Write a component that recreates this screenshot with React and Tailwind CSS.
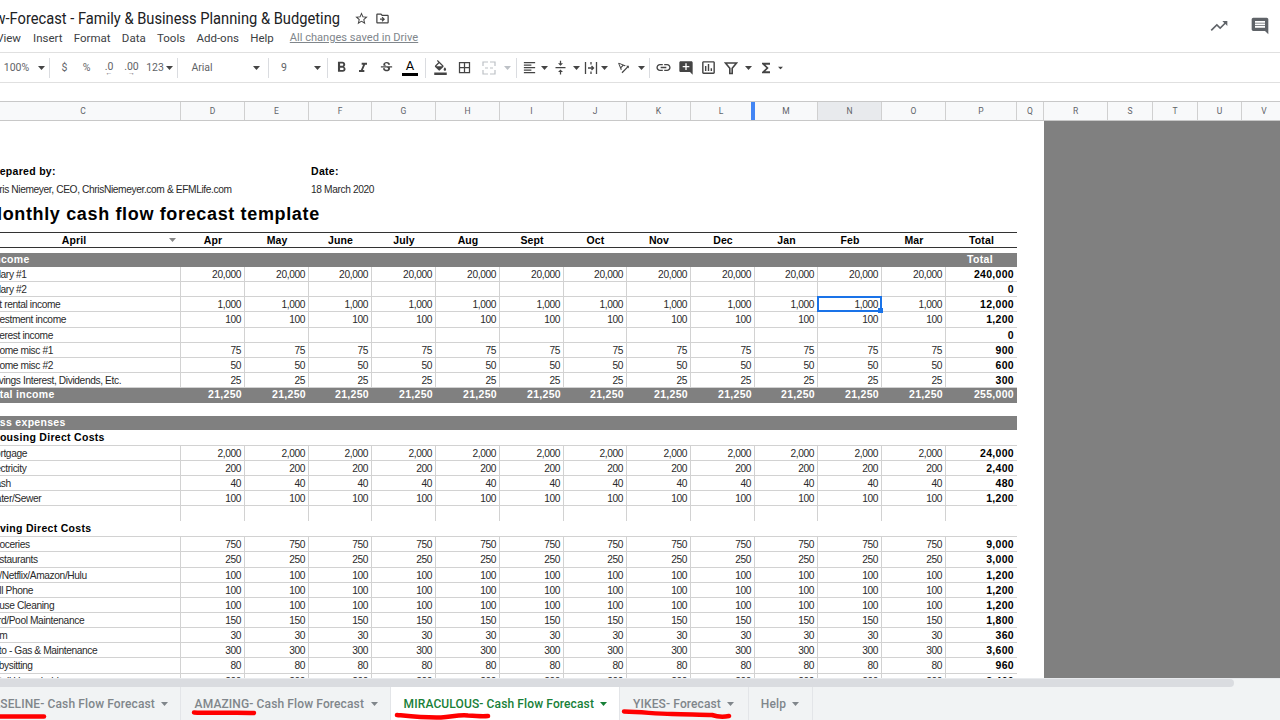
import React from "react";
import {
  MdStarBorder, MdOutlineDriveFileMove, MdFormatBold, MdFormatItalic, MdStrikethroughS, MdFormatColorFill,
  MdBorderAll, MdFormatAlignLeft, MdVerticalAlignCenter, MdTextRotationAngleup, MdLink, MdAddComment,
  MdOutlineInsertChart, MdFunctions, MdComment, MdTrendingUp,
} from "react-icons/md";

const sans = "font-['Liberation_Sans',Arial,sans-serif]";
const rob = "font-['Roboto',sans-serif]";
const gridCols = "grid grid-cols-[181px_64px_64px_63px_64px_64px_64px_63px_64px_64px_63px_64px_64px_71px]";
const months = ["Apr", "May", "June", "July", "Aug", "Sept", "Oct", "Nov", "Dec", "Jan", "Feb", "Mar"];

function Caret({ className = "" }) {
  return (
    <svg width="7" height="4" viewBox="0 0 7 4" className={`shrink-0 ${className}`}>
      <path d="M0 0h7L3.5 4z" fill="currentColor" />
    </svg>
  );
}

function Tool({ w, children, className = "" }) {
  return <div className={`flex items-center justify-center shrink-0 h-full ${w} ${className}`}>{children}</div>;
}
function Sep() {
  return <div className="w-px h-[20px] bg-[#dadce0] shrink-0" />;
}

function MergeIcon() {
  return (
    <svg width="14" height="14" viewBox="0 0 14 14" fill="none" stroke="#bdc1c6" strokeWidth="1.2">
      <path d="M1 5V1h5M8 1h5v4M1 9v4h5M8 13h5V9M3 7h3M8 7h3" />
    </svg>
  );
}
function WrapIcon() {
  return (
    <svg width="14" height="14" viewBox="0 0 14 14" fill="none" stroke="#444" strokeWidth="1.3">
      <path d="M1.5 1v12M12.5 1v12" />
      <path d="M4 7h5.5M7.5 5l2 2-2 2" />
      <path d="M7 1v2.5M7 10.5V13" />
    </svg>
  );
}
function FilterIcon() {
  return (
    <svg width="14" height="14" viewBox="0 0 14 14" fill="none" stroke="#444" strokeWidth="1.6">
      <path d="M1.5 2h11L8.2 7.2V12.5H5.8V7.2z" />
    </svg>
  );
}

function Toolbar() {
  const t = `text-[10.5px] text-[#5f6368] ${rob}`;
  return (
    <div className="flex items-center h-[31px] border-y border-[#e0e0e0] text-[#444] overflow-hidden">
      <Tool w="w-[33px]" className={t}>100%</Tool>
      <Tool w="w-[16px]"><Caret /></Tool>
      <Sep />
      <Tool w="w-[29px]" className={t}>$</Tool>
      <Tool w="w-[15px]" className={t}>%</Tool>
      <Tool w="w-[30px]" className={`${t} flex-col leading-[9px] pt-[3px]`}><span>.0</span><span className="text-[7px] leading-[5px]">←</span></Tool>
      <Tool w="w-[15px]" className={`${t} flex-col leading-[9px] pt-[3px]`}><span>.00</span><span className="text-[7px] leading-[5px]">→</span></Tool>
      <Tool w="w-[5px]"> </Tool>
      <Tool w="w-[22px]" className={t}>123</Tool>
      <Tool w="w-[6px]"><Caret /></Tool>
      <Tool w="w-[5px]"> </Tool>
      <Sep />
      <Tool w="w-[9px]"> </Tool>
      <Tool w="w-[30px]" className={`${t} ${sans}`}>Arial</Tool>
      <Tool w="w-[36px]"> </Tool>
      <Tool w="w-[7px]"><Caret /></Tool>
      <Tool w="w-[8px]"> </Tool>
      <Sep />
      <Tool w="w-[30px]" className={t}>9</Tool>
      <Tool w="w-[15px]"> </Tool>
      <Tool w="w-[7px]"><Caret /></Tool>
      <Tool w="w-[6px]"> </Tool>
      <Sep />
      <Tool w="w-[26px]"><MdFormatBold size={17} /></Tool>
      <Tool w="w-[18px]"><MdFormatItalic size={16} /></Tool>
      <Tool w="w-[28px]"><MdStrikethroughS size={15} /></Tool>
      <Tool w="w-[20px]">
        <div className="flex flex-col items-center">
          <span className={`text-[13px] leading-[13px] text-black ${rob}`}>A</span>
          <div className="w-[16px] h-[3px] bg-black mt-[1px]" />
        </div>
      </Tool>
      <Tool w="w-[5px]"> </Tool>
      <Sep />
      <Tool w="w-[28px]"><MdFormatColorFill size={15} /></Tool>
      <Tool w="w-[20px]"><MdBorderAll size={15} /></Tool>
      <Tool w="w-[30px]"><MergeIcon /></Tool>
      <Tool w="w-[7px]"><Caret className="text-[#bdc1c6]" /></Tool>
      <Tool w="w-[5px]"> </Tool>
      <Sep />
      <Tool w="w-[24px]"><MdFormatAlignLeft size={15} /></Tool>
      <Tool w="w-[7px]"><Caret /></Tool>
      <Tool w="w-[25px]"><MdVerticalAlignCenter size={15} /></Tool>
      <Tool w="w-[7px]"><Caret /></Tool>
      <Tool w="w-[21px]"><WrapIcon /></Tool>
      <Tool w="w-[7px]"><Caret /></Tool>
      <Tool w="w-[30px]"><MdTextRotationAngleup size={15} /></Tool>
      <Tool w="w-[7px]"><Caret /></Tool>
      <Tool w="w-[4px]"> </Tool>
      <Sep />
      <Tool w="w-[27px]"><MdLink size={17} /></Tool>
      <Tool w="w-[17px]"><MdAddComment size={16} /></Tool>
      <Tool w="w-[28px]"><MdOutlineInsertChart size={17} /></Tool>
      <Tool w="w-[18px]"><FilterIcon /></Tool>
      <Tool w="w-[16px]"><Caret /></Tool>
      <Tool w="w-[20px]"><MdFunctions size={16} /></Tool>
      <Tool w="w-[8px]"><Caret className="scale-75" /></Tool>
    </div>
  );
}

function ColHeaders() {
  const cols = [
    ["C", "w-[181px] pr-[14px]"], ["D", "w-[64px]"], ["E", "w-[64px]"], ["F", "w-[63px]"], ["G", "w-[64px]"], ["H", "w-[64px]"], ["I", "w-[64px]"], ["J", "w-[63px]"],
    ["K", "w-[64px]"], ["L", "w-[64px] border-r-[4px] border-r-[#4285f4]"], ["M", "w-[63px]"], ["N", "w-[64px] bg-[#e8eaed]"], ["O", "w-[64px]"], ["P", "w-[71px]"], ["Q", "w-[27px]"],
    ["R", "w-[64px]"], ["S", "w-[45px]"], ["T", "w-[45px]"], ["U", "w-[44px]"], ["V", "w-[45px]"],
  ];
  return (
    <div className={`flex h-[20px] bg-[#f8f9fa] border-y border-[#c8c8c8] text-[8.5px] text-[#5f6368] ${rob}`}>
      {cols.map(([l, c]) => (
        <div key={l} className={`flex items-center justify-center shrink-0 border-r border-[#d0d0d0] ${c}`}>{l}</div>
      ))}
    </div>
  );
}

function Row({ label, v, total, sel, noBottom, ml = "-ml-[13px]" }) {
  const line = noBottom ? "" : "border-b border-[#d2d2d2]";
  const vals = v === null || v === undefined ? Array(12).fill("") : Array(12).fill(v);
  return (
    <div className={`${gridCols} h-[15.15px] text-[10.2px] tracking-[-0.38px] leading-[15.5px] text-[#2a2a2a] ${sans} ${line}`}>
      <div className="border-r border-[#d2d2d2] overflow-hidden whitespace-nowrap">
        <span className={`block ${ml}`}>{label}</span>
      </div>
      {vals.map((x, i) => (
        <div key={i} className={`relative border-r border-[#d2d2d2] text-right pr-[3px] ${sel && i === 10 ? "z-10" : ""}`}>
          {x}
          {sel && i === 10 && (
            <div className="absolute -left-px -top-px w-[65px] h-[16px] border-2 border-[#1a73e8]">
              <div className="absolute -right-[3px] -bottom-[3px] w-[5px] h-[5px] bg-[#1a73e8]" />
            </div>
          )}
        </div>
      ))}
      <div className="text-right pr-[3px] font-bold text-[10.5px] leading-[14px] tracking-[0.3px] text-black">{total}</div>
    </div>
  );
}

function GrayRow({ label, v, total, ml = "-ml-[13px]", h = "h-[14.5px]" }) {
  return (
    <div className={`${gridCols} ${h} bg-[#808080] text-white font-bold text-[10.5px] leading-[13px] tracking-[0.3px] ${sans}`}>
      <div className="overflow-hidden whitespace-nowrap"><span className={`block ${ml}`}>{label}</span></div>
      {Array(12).fill(v || "").map((x, i) => (
        <div key={i} className="text-right pr-[3px]">{x}</div>
      ))}
      <div className={`pr-[3px] ${v ? "text-right" : "text-center"}`}>{total}</div>
    </div>
  );
}

function Section({ label, ml }) {
  return (
    <div className={`h-[15px] overflow-hidden whitespace-nowrap font-bold text-[10.5px] leading-[15px] tracking-[0.3px] text-black ${sans}`}>
      <span className={`block ${ml}`}>{label}</span>
    </div>
  );
}

function Sheet() {
  return (
    <div className="w-[1044px] shrink-0 overflow-hidden">
      <div className="w-[1017px]">
        <div className="h-[43px]" />
        <div className={`${gridCols} h-[15px] items-center font-bold text-[10.5px] tracking-[0.3px] text-black ${sans}`}>
          <div className="overflow-hidden whitespace-nowrap col-span-3"><span className="block -ml-[12px]">Prepared by:</span></div>
          <div className="pl-[2px]">Date:</div>
        </div>
        <div className="h-[3px]" />
        <div className={`${gridCols} h-[15px] items-center text-[10.2px] tracking-[-0.38px] text-[#2a2a2a] ${sans}`}>
          <div className="overflow-hidden whitespace-nowrap col-span-3"><span className="block -ml-[13px]">Chris Niemeyer, CEO, ChrisNiemeyer.com &amp; EFMLife.com</span></div>
          <div className="whitespace-nowrap pl-[2px]">18 March 2020</div>
        </div>
        <div className="h-[5px]" />
        <div className={`h-[24px] overflow-hidden whitespace-nowrap font-bold text-[18px] leading-[24px] tracking-[0.65px] text-black ${sans}`}>
          <span className="block -ml-[13px]">Monthly cash flow forecast template</span>
        </div>
        <div className="h-[6px]" />
        <div className={`${gridCols} h-[16px] items-center border-y border-[#333] font-bold text-[10.5px] tracking-[0.1px] text-black ${sans}`}>
          <div className="relative text-center pr-[33px]">April<Caret className="absolute right-[5px] top-[5px] text-[#888]" /></div>
          {months.map((m) => <div key={m} className="text-center">{m}</div>)}
          <div className="text-center">Total</div>
        </div>
        <div className="h-[5px]" />
        <GrayRow label="Income" total="Total" ml="-ml-[9px]" h="h-[14px]" />
        <Row label="Salary #1" v="20,000" total="240,000" />
        <Row label="Salary #2" total="0" />
        <Row label="Net rental income" v="1,000" total="12,000" sel />
        <Row label="Investment income" v="100" total="1,200" />
        <Row label="Interest income" total="0" ml="-ml-[11px]" />
        <Row label="Income misc #1" v="75" total="900" />
        <Row label="Income misc #2" v="50" total="600" />
        <Row label="Savings Interest, Dividends, Etc." v="25" total="300" />
        <GrayRow label="Total income" v="21,250" total="255,000" />
        <div className="h-[13px]" />
        <GrayRow label="Less expenses" ml="-ml-[13px]" h="h-[14px]" />
        <Section label="Housing Direct Costs" ml="-ml-[8px]" />
        <div className="border-t border-[#d2d2d2]">
          <Row label="Mortgage" v="2,000" total="24,000" />
          <Row label="Electricity" v="200" total="2,400" />
          <Row label="Trash" v="40" total="480" />
          <Row label="Water/Sewer" v="100" total="1,200" />
          <Row label="" noBottom />
        </div>
        <Section label="Living Direct Costs" ml="-ml-[10px]" />
        <div className="border-t border-[#d2d2d2]">
          <Row label="Groceries" v="750" total="9,000" ml="-ml-[11px]" />
          <Row label="Restaurants" v="250" total="3,000" />
          <Row label="TV/Netflix/Amazon/Hulu" v="100" total="1,200" />
          <Row label="Cell Phone" v="100" total="1,200" />
          <Row label="House Cleaning" v="100" total="1,200" />
          <Row label="Yard/Pool Maintenance" v="150" total="1,800" />
          <Row label="Gym" v="30" total="360" />
          <Row label="Auto - Gas & Maintenance" v="300" total="3,600" />
          <Row label="Babysitting" v="80" total="960" />
          <Row label="Retail Household" v="200" total="2,400" />
        </div>
      </div>
    </div>
  );
}

function Tab({ w, children, active, border = true }) {
  return (
    <div className={`flex items-center justify-end h-full shrink-0 overflow-hidden whitespace-nowrap ${w} ${border ? "border-r border-[#e3e5e8]" : ""} ${active ? "bg-white text-[#188038]" : "text-[#80868b]"}`}>
      {children}
    </div>
  );
}

function Tabs() {
  return (
    <div className={`relative flex h-[33px] bg-[#f1f3f4] text-[12px] font-medium tracking-[0.12px] ${rob}`}>
      <Tab w="w-[181px]"><span className="shrink-0">BASELINE- Cash Flow Forecast</span><Caret className="ml-[6px] mr-[12px]" /></Tab>
      <Tab w="w-[210px]"><span className="shrink-0">AMAZING- Cash Flow Forecast</span><Caret className="ml-[7px] mr-[12px]" /></Tab>
      <Tab w="w-[229px]" active><span className="shrink-0">MIRACULOUS- Cash Flow Forecast</span><Caret className="ml-[6px] mr-[12px]" /></Tab>
      <Tab w="w-[129px]"><span className="shrink-0">YIKES- Forecast</span><Caret className="ml-[6px] mr-[14px]" /></Tab>
      <Tab w="w-[64px]"><span className="shrink-0">Help</span><Caret className="ml-[6px] mr-[13px]" /></Tab>
      <svg className="absolute left-0 top-0 pointer-events-none" width="1280" height="33" viewBox="0 0 1280 33" fill="none" stroke="#f00" strokeWidth="4.5" strokeLinecap="round">
        <path d="M0 29.5H44" />
        <path d="M194 25.5C212 26.5 236 25 254 26" />
        <path d="M397 28C412 29.5 425 31 441 30.5C452 30 458 27.5 468 28.5C475 29 482 29.5 488 29" />
        <path d="M624 24.5C645 25 655 27 672 27C690 27.5 705 27.5 712 28C718 30 724 30 729 29" />
      </svg>
    </div>
  );
}

export default function App() {
  return (
    <div className={`w-[1280px] h-[720px] overflow-hidden bg-white flex flex-col ${rob}`}>
      <div className="h-[52px] flex shrink-0">
        <div className="flex-1 flex flex-col">
          <div className="flex items-center h-[26px] mt-[5px]">
            <div className="w-[340px] flex justify-end overflow-hidden whitespace-nowrap text-[14.7px] text-[#202124]">
              <span className="inline-block shrink-0 scale-y-[1.18]">Cash Flow-Forecast - Family &amp; Business Planning &amp; Budgeting</span>
            </div>
            <MdStarBorder size={15} className="ml-[14px] text-[#444]" />
            <MdOutlineDriveFileMove size={15} className="ml-[6px] text-[#444]" />
          </div>
          <div className="flex items-center h-[15px] text-[11.5px] text-[#3c4043]">
            <div className="w-[21px] flex justify-end overflow-hidden whitespace-nowrap"><span className="shrink-0">File Edit View</span></div>
            <div className="flex gap-[11.3px] ml-[12px]">
              <span>Insert</span><span>Format</span><span>Data</span><span>Tools</span><span>Add-ons</span><span>Help</span>
            </div>
            <span className="ml-[16px] text-[11.1px] text-[#80868b] underline">All changes saved in Drive</span>
          </div>
        </div>
        <div className="flex items-center h-full text-[#5f6368]">
          <MdTrendingUp size={20} className="mr-[21px]" />
          <MdComment size={20} className="mr-[10px]" />
        </div>
      </div>
      <Toolbar />
      <div className="h-[18px] shrink-0" />
      <ColHeaders />
      <div className="flex h-[557px] shrink-0 overflow-hidden">
        <Sheet />
        <div className="flex-1 bg-[#808080]" />
      </div>
      <div className="h-[9px] shrink-0 bg-[#f1f3f4] border-t border-[#e8eaed]">
        <div className="w-[1234px] h-full bg-[#dadce0] rounded-r-[4px]" />
      </div>
      <Tabs />
    </div>
  );
}
